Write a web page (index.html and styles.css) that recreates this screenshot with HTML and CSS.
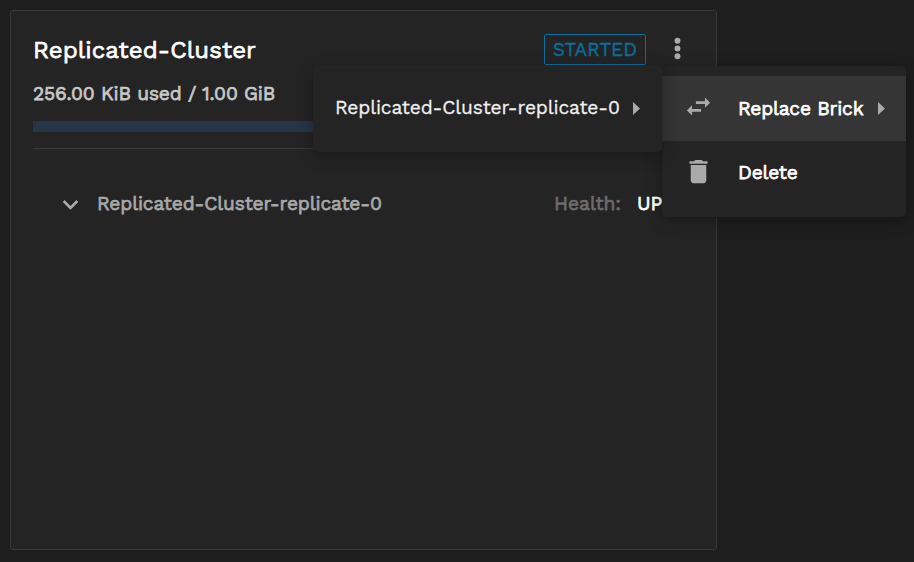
FILE: index.html
```html
<!DOCTYPE html>
<html lang="en">
<head>
<meta charset="utf-8">
<title>Replicated-Cluster</title>
<link rel="stylesheet" href="styles.css">
</head>
<body>
<main class="card">
  <header class="card-header">
    <h1 class="title">Replicated-Cluster</h1>
    <span class="status">STARTED</span>
    <svg class="icon more" viewBox="0 0 24 24"><circle cx="12" cy="6" r="2.300"/><circle cx="12" cy="12" r="2.300"/><circle cx="12" cy="18" r="2.300"/></svg>
  </header>
  <p class="usage">256.00 KiB used / 1.00 GiB</p>
  <div class="bar"></div>
  <hr class="divider">
  <div class="row">
    <svg class="icon chevron" viewBox="0 0 24 24"><path d="M16.590 8.590L12 13.170 7.410 8.590 6 10l6 6 6-6z"/></svg>
    <span class="replica">Replicated-Cluster-replicate-0</span>
    <span class="health">Health:</span>
    <span class="up">UP</span>
  </div>
</main>
<nav class="menu">
  <div class="item active">
    <svg class="icon swap" viewBox="0 0 24 24"><path d="M6.990 11L3 15l3.990 4v-3H14v-2H6.990v-3zM21 9l-3.990-4v3H10v2h7.010v3L21 9z"/></svg>
    <span class="label replace">Replace Brick</span>
    <svg class="arrow" viewBox="0 0 7 13"><path d="M0 0l7 6.500L0 13z"/></svg>
  </div>
  <div class="item">
    <svg class="icon trash" viewBox="0 0 24 24"><path d="M6 19c0 1.100.9 2 2 2h8c1.100 0 2-.9 2-2V7H6v12zM19 4h-3.500l-1-1h-5l-1 1H5v2h14V4z"/></svg>
    <span class="label delete">Delete</span>
  </div>
</nav>
<nav class="submenu">
  <span class="sub-label">Replicated-Cluster-replicate-0</span>
  <svg class="arrow" viewBox="0 0 7 13"><path d="M0 0l7 6.500L0 13z"/></svg>
</nav>
</body>
</html>
```
FILE: styles.css
```css
* { box-sizing: border-box; }
body {
  margin: 0;
  padding: 10px;
  height: 562px;
  overflow: hidden;
  background: #1e1e1e;
  color: #fff;
  font: 400 19.2px/24px "Work Sans", Inter, sans-serif;
  white-space: nowrap;
}
.card {
  width: 707px;
  height: 540px;
  padding: 22px;
  background: #242424;
  border: 1px solid #383838;
  border-radius: 3px;
}
.title, .usage, .replica, .health, .up, .label { -webkit-text-stroke: .75px currentColor; }
.icon { width: 31px; height: 31px; flex: none; fill: #aaa; }
.card-header { display: flex; align-items: center; height: 32px; }
.title { margin: 1px 0 0; font-size: 24px; font-weight: 400; line-height: 32px; letter-spacing: .12px; }
.status {
  margin-left: auto;
  width: 102px;
  height: 31px;
  border: 1px solid #0b6e9d;
  border-radius: 2px;
  color: #0b6e9d;
  line-height: 30px;
  text-align: center;
  -webkit-text-stroke: .35px currentColor;
}
.more { margin: -1px 1px 0 16px; }
.usage { margin: 17px 0 15px; color: #c8c8c8; letter-spacing: -.15px; }
.bar { height: 11px; background: #263646; }
.divider { margin: 16px 0 0; border: 0; height: 1px; background: #3a3a3a; }
.row { display: flex; align-items: center; margin-top: 40px; padding-left: 22px; height: 31px; }
.replica { margin: -1px 0 0 11px; color: #a8a8a8; letter-spacing: -.13px; }
.health { margin: -1px 0 0 auto; color: #6c6c6c; }
.up { width: 57px; margin: -1px 0 0 16px; }
.menu, .submenu {
  position: absolute;
  background: #242424;
  border-radius: 5px;
  box-shadow: 0 4px 16px rgba(0, 0, 0, .32);
}
.menu { left: 662px; top: 66px; width: 244px; height: 151px; padding-top: 10px; }
.item { display: flex; height: 64px; padding: 15px 21px; }
.active { height: 65px; background: #353535; }
.swap, .trash { margin-top: -.5px; }
.label { margin-left: 24px; line-height: 35px; letter-spacing: -.18px; }
.delete { line-height: 33px; }
.arrow { width: 7px; height: 13px; fill: #aaa; flex: none; }
.item .arrow { margin: 11px 0 0 auto; }
.submenu { left: 313px; top: 65px; width: 349px; height: 87px; padding: 31px 22px 0; display: flex; }
.sub-label { color: #f0f0f0; letter-spacing: -.13px; -webkit-text-stroke: .3px currentColor; }
.submenu .arrow { margin: 6px 0 0 auto; }
```
